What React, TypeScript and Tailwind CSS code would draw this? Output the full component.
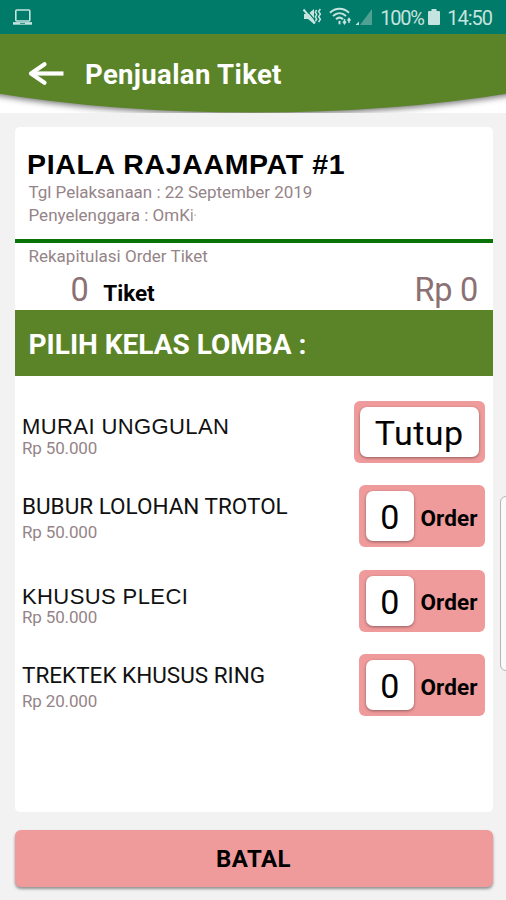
import React, { FC } from 'react';
import clsx from 'clsx';

interface TicketClass {
    name: string;
    price: string;
    closed?: boolean;
    wide?: boolean;
    nameClass: string;
    priceClass: string;
}

const classes: TicketClass[] = [
    {
        name: 'MURAI UNGGULAN',
        price: 'Rp 50.000',
        closed: true,
        wide: true,
        nameClass: 'mt-[14px] text-[22px] tracking-[0.4px]',
        priceClass: '-mt-[3px]',
    },
    {
        name: 'BUBUR LOLOHAN TROTOL',
        price: 'Rp 50.000',
        nameClass: 'mt-[9px] text-[22.500px]',
        priceClass: 'mt-[2px]',
    },
    {
        name: 'KHUSUS PLECI',
        price: 'Rp 50.000',
        wide: true,
        nameClass: 'mt-[15px] text-[22px] tracking-[0.4px]',
        priceClass: '-mt-[4px]',
    },
    {
        name: 'TREKTEK KHUSUS RING',
        price: 'Rp 20.000',
        nameClass: 'mt-[9px] text-[22.500px]',
        priceClass: 'mt-[2px]',
    },
];

const StatusBar: FC = () => (
    <div className="flex h-[34px] w-full items-center bg-[#007a69] pl-[12px] pr-[14px] text-[#c5e3df]">
        <svg className="h-[18px] w-[21px]" viewBox="0 0 21 18" fill="none" stroke="currentColor" strokeWidth="1.6">
            <rect x="3.8" y="2" width="14" height="11" rx="1" />
            <path d="M1 15.400h19" strokeWidth="2.6" />
            <path d="M8 15.400h5" stroke="#007a69" strokeWidth="0.8" />
        </svg>
        <svg className="ml-auto h-[20px] w-[21px]" viewBox="0 0 21 20">
            <path d="M2 7h4l6-5v15l-6-5H2z" fill="currentColor" />
            <path d="M3.200 1.700l11 13" stroke="#007a69" strokeWidth="1.200" />
            <path d="M1.500 2.500l11.500 14" stroke="currentColor" strokeWidth="2" />
            <path d="M14.700 3l-1.400 2.200 1.400 2.400-1.400 2.400 1.400 2.200-1.400 2.200M18.400 2l-1.800 2.600 1.800 2.500-1.800 2.600 1.800 2.500-1.800 3" fill="none" stroke="currentColor" strokeWidth="1.5" />
        </svg>
        <svg className="ml-[6px] h-[20px] w-[24px]" viewBox="0 0 24 20" fill="none" stroke="currentColor" strokeWidth="2">
            <path d="M1 5.700c5.500-5.400 13.500-5.400 19 0M4 9c4-3.800 9-3.800 13 0M7 12.300c2.300-2.200 4.700-2.200 7 0" />
            <path d="M10.500 13.800v3.500" />
            <path d="M15.500 12v4M14 14.500l1.500 2.200 1.500-2.200M20 16v-4M18.500 13.700l1.500-2.200 1.500 2.200" strokeWidth="1.500" />
        </svg>
        <svg className="ml-[2px] h-[18px] w-[18px]" viewBox="0 0 18 18">
            <path d="M17 1v16H5z" fill="#4fa194" />
            <path d="M4 13.500v3.500H.5z" fill="currentColor" />
        </svg>
        <span className="ml-[7px] w-[43px] whitespace-nowrap pt-px text-[20px] leading-[34px] tracking-[-1.200px]">100%</span>
        <svg className="ml-[5px] h-[18px] w-[12px]" viewBox="0 0 12 18" fill="currentColor">
            <path d="M3.500 1h5v2H11q1 0 1 1v12q0 1-1 1H1q-1 0-1-1V4q0-1 1-1h2.500z" />
        </svg>
        <span className="ml-[7px] pt-px text-[20px] leading-[34px] tracking-[-1px]">14:50</span>
    </div>
);

const Header: FC = () => (
    <div className="relative h-[79px] w-full overflow-hidden bg-white">
        <svg className="absolute left-0 top-0 h-[79px] w-full" viewBox="0 0 506 79">
            <path
                d="M-20-20H526V56.500Q400 78.500 253 78.500Q106 78.500-20 56.500Z"
                fill="#5a8427"
                className="drop-shadow-[0_2px_3px_rgba(0,0,0,0.55)]"
            />
        </svg>
        <div className="relative flex h-[79px] items-center pl-[27px]">
            <svg className="h-[26px] w-[38px]" viewBox="0 0 38 26" fill="none" stroke="#fff" strokeWidth="4.200">
                <path d="M36.500 12.500H5" />
                <path d="M17.500 3.200L4 12.500l13.500 9.300" strokeLinecap="round" strokeLinejoin="round" />
            </svg>
            <h1 className="ml-[20px] mt-[2px] text-[27.500px] font-bold leading-[32px] tracking-[0.350px] text-white">Penjualan Tiket</h1>
        </div>
    </div>
);

const OrderButton: FC<{ closed?: boolean }> = ({ closed }) => (
    <button
        type="button"
        className={clsx(
            'flex h-[62px] items-center rounded-[6px] bg-[#ef9a9b] py-[6px] pl-[6.500px] text-black',
            closed ? 'w-[131.500px]' : 'w-[126px]',
        )}
    >
        <span
            className={clsx(
                'flex h-[50px] items-center justify-center rounded-[7px] bg-white pt-[2px] text-[34px] leading-[40px] shadow-[0_1px_3px_rgba(0,0,0,0.4)]',
                closed ? 'w-[118.500px] tracking-[0.5px]' : 'w-[48.500px]',
            )}
        >
            {closed ? 'Tutup' : '0'}
        </span>
        {!closed && (
            <span className="ml-[6.500px] mt-[3px] text-[22.500px] font-bold leading-[28px] tracking-[0.100px]">Order</span>
        )}
    </button>
);

const TicketRow: FC<{ item: TicketClass }> = ({ item }) => (
    <div className="flex h-[84.400px] items-start justify-between pl-[7.500px] pr-[8px]">
        <div className="flex flex-col whitespace-nowrap">
            <span
                className={clsx(
                    'leading-[24px] text-[#111]',
                    item.wide && "font-['Liberation_Sans',sans-serif]",
                    item.nameClass,
                )}
            >
                {item.name}
            </span>
            <span className={clsx('text-[17px] leading-[24px] tracking-[-0.150px] text-[#958488]', item.priceClass)}>{item.price}</span>
        </div>
        <OrderButton closed={item.closed} />
    </div>
);

const App: FC = () => (
    <div className="relative flex h-[900px] w-[506px] flex-col overflow-hidden bg-[#f2f2f2] font-['Roboto',sans-serif]">
        <StatusBar />
        <Header />
        <main className="ml-[14.500px] mt-[14px] flex h-[685px] w-[478.500px] flex-col rounded-[5px] bg-white">
            <section className="flex h-[112px] flex-col whitespace-nowrap pl-[12.500px] pt-[21px]">
                <h2 className="font-['Liberation_Sans',sans-serif] text-[28.500px] font-bold leading-[32px] tracking-[0.650px] text-black">
                    PIALA RAJAAMPAT #1
                </h2>
                <p className="ml-[1.500px] mt-px text-[17px] leading-[23px] tracking-[-0.030px] text-[#958488]">
                    Tgl Pelaksanaan : 22 September 2019
                </p>
                <p className="ml-[1.500px] text-[17px] leading-[23px] text-[#958488]">
                    Penyelenggara : OmK<span className="opacity-80">i</span>
                    <span className="-ml-px opacity-50">·</span>
                </p>
            </section>
            <section className="flex h-[71px] flex-col border-t-[4px] border-[#087308] pl-[14px] pr-[15px]">
                <p className="mt-[2px] text-[17px] leading-[23px] text-[#958488]">Rekapitulasi Order Tiket</p>
                <div className="mt-[3px] flex items-baseline leading-[38px] text-[#8b7074]">
                    <span className="ml-[42px] text-[32.500px]">0</span>
                    <span className="ml-[14.500px] text-[22.500px] font-bold text-black">Tiket</span>
                    <span className="ml-auto text-[32.500px] tracking-[-0.300px]">Rp 0</span>
                </div>
            </section>
            <h3 className="flex h-[66px] items-center bg-[#5a8427] pl-[14px] pt-[3px] text-[28px] font-bold text-white">
                PILIH KELAS LOMBA :
            </h3>
            <section className="mt-[25px] flex flex-col">
                {classes.map((item) => (
                    <TicketRow key={item.name} item={item} />
                ))}
            </section>
        </main>
        <button
            type="button"
            className="ml-[14.500px] mt-[18px] h-[57px] w-[478px] rounded-[6px] bg-[#ef9a9b] pt-px text-[24px] font-bold tracking-[0.500px] text-black shadow-[0_2px_3px_rgba(0,0,0,0.4)]"
        >
            BATAL
        </button>
        {/* edge panel handle */}
        <div className="absolute left-[500px] top-[496px] h-[175px] w-[12px] rounded-[7px] border border-[#b5b5b5] bg-[#fafafa]" />
    </div>
);

export default App;
